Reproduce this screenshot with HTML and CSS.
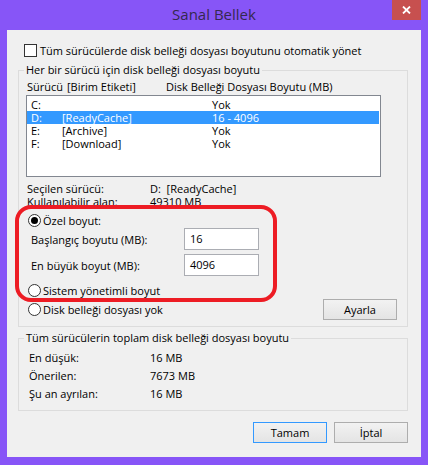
FILE: index.html
```html
<!DOCTYPE html>
<html lang="tr">
<head>
<meta charset="utf-8">
<title>Sanal Bellek</title>
<link rel="stylesheet" href="styles.css">
</head>
<body>
<div class="window">
  <div class="titlebar">
    <span class="title">Sanal Bellek</span>
    <div class="close">
      <svg width="9" height="8" viewBox="0 0 9 8"><path d="M1 0.5 L8 7.5 M8 0.5 L1 7.5" stroke="#fff" stroke-width="1.8" fill="none"/></svg>
    </div>
  </div>
  <div class="client">
    <div class="check-row"><span class="checkbox"></span>Tüm sürücülerde disk belleği dosyası boyutunu otomatik yönet</div>

    <div class="group group-drives">
      <span class="group-title">Her bir sürücü için disk belleği dosyası boyutu</span>
      <div class="list-head"><span>Sürücü</span><span>[Birim Etiketi]</span><span>Disk Belleği Dosyası Boyutu (MB)</span></div>
      <div class="listbox">
        <div class="row"><span>C:</span><span></span><span>Yok</span></div>
        <div class="row selected"><span>D:</span><span>[ReadyCache]</span><span>16 - 4096</span></div>
        <div class="row"><span>E:</span><span>[Archive]</span><span>Yok</span></div>
        <div class="row"><span>F:</span><span>[Download]</span><span>Yok</span></div>
      </div>
      <div class="info">
        <span>Seçilen sürücü:</span><span>D:&nbsp;&nbsp;[ReadyCache]</span>
        <span>Kullanılabilir alan:</span><span>49310 MB</span>
      </div>
      <div class="radio-row custom"><span class="radio checked"></span>Özel boyut:</div>
      <div class="field"><span>Başlangıç boyutu (MB):</span><span class="input">16</span></div>
      <div class="field"><span>En büyük boyut (MB):</span><span class="input">4096</span></div>
      <div class="radio-row system"><span class="radio"></span>Sistem yönetimli boyut</div>
      <div class="radio-row none"><span class="radio"></span>Disk belleği dosyası yok<span class="btn set">Ayarla</span></div>
    </div>

    <div class="group group-total">
      <span class="group-title">Tüm sürücülerin toplam disk belleği dosyası boyutu</span>
      <div class="totals">
        <span>En düşük:</span><span>16 MB</span>
        <span>Önerilen:</span><span>7673 MB</span>
        <span>Şu an ayrılan:</span><span>16 MB</span>
      </div>
    </div>

    <div class="actions">
      <span class="btn primary">Tamam</span>
      <span class="btn">İptal</span>
    </div>

    <div class="highlight"></div>
  </div>
</div>
</body>
</html>
```

FILE: styles.css
```css
* { box-sizing: border-box; }
html, body { margin: 0; padding: 0; }
body {
  width: 428px;
  height: 465px;
  overflow: hidden;
  background: #8755f7;
  font-family: "Open Sans", "Noto Sans", sans-serif;
  font-size: 11px;
  color: #000;
}
.window {
  width: 428px;
  height: 465px;
  background: #8755f7;
}
.titlebar {
  position: relative;
  height: 30px;
  display: flex;
  justify-content: center;
  align-items: center;
}
.title {
  font-size: 15px;
  color: #35284f;
  line-height: 20px;
  margin-top: -2px;
}
.close {
  position: absolute;
  top: 0;
  right: 7px;
  width: 29px;
  height: 20px;
  background: #c7504f;
  display: flex;
  align-items: center;
  justify-content: center;
}
.client {
  position: relative;
  margin: 0 7px;
  width: 414px;
  height: 427px;
  background: #f0f0f0;
  padding-top: 14px;
}
.check-row {
  display: flex;
  align-items: center;
  height: 13px;
  line-height: 13px;
  padding-left: 17px;
}
.checkbox {
  width: 13px;
  height: 13px;
  border: 1px solid #333;
  background: #fff;
  margin-right: 3px;
  flex: none;
}
.group {
  position: relative;
  margin-left: 11px;
  width: 390px;
  border: 1px solid #dcdcdc;
}
.group-title {
  position: absolute;
  top: -8px;
  left: 5px;
  padding: 0 2px;
  background: #f0f0f0;
  line-height: 14px;
  white-space: nowrap;
}
.group-drives { margin-top: 13px; }
.list-head {
  margin-top: 9px;
  height: 14px;
  line-height: 14px;
  padding-left: 8px;
  display: grid;
  grid-template-columns: 40px 99px auto;
  white-space: nowrap;
}
.listbox {
  margin: 1px 0 0 7px;
  width: 355px;
  height: 82px;
  border: 1px solid #828790;
  background: #fff;
  padding: 2px 1px 0 0;
}
.row {
  display: grid;
  grid-template-columns: 31px 150px auto;
  height: 13px;
  line-height: 13px;
  padding-left: 4px;
  white-space: nowrap;
}
.row.selected {
  background: #3399ff;
  color: #fff;
}
.info {
  margin-top: 5px;
  padding-left: 8px;
  display: grid;
  grid-template-columns: 123px auto;
  line-height: 13px;
}
.radio-row {
  display: flex;
  align-items: center;
  padding-left: 9px;
  white-space: nowrap;
}
.radio {
  width: 13px;
  height: 13px;
  border: 1px solid #333;
  border-radius: 50%;
  background: #fff;
  margin-right: 2px;
  flex: none;
  display: flex;
  align-items: center;
  justify-content: center;
}
.radio.checked::after {
  content: "";
  width: 7px;
  height: 7px;
  border-radius: 50%;
  background: #000;
}
.custom {
  margin-top: 6px;
  height: 13px;
  margin-bottom: 1px;
}
.field {
  display: grid;
  grid-template-columns: 153px 75px;
  align-items: center;
  height: 22px;
  padding-left: 12px;
}
.field + .field { margin-top: 4px; }
.input {
  height: 22px;
  line-height: 20px;
  border: 1px solid #abadb3;
  background: #fff;
  padding-left: 5px;
}
.system {
  margin-top: 7px;
  height: 14px;
}
.none {
  margin-top: 2px;
  height: 21px;
  margin-bottom: 6px;
}
.btn {
  display: flex;
  align-items: center;
  justify-content: center;
  width: 74px;
  height: 21px;
  border: 1px solid #adadad;
  background: linear-gradient(#f2f2f2, #e4e4e4);
}
.btn.set {
  margin-left: auto;
  margin-right: 10px;
}
.btn.primary { border-color: #3399ff; }
.group-total { margin-top: 11px; }
.totals {
  padding: 10px 0 7px 10px;
  display: grid;
  grid-template-columns: 121px auto;
  line-height: 18px;
}
.actions {
  margin-top: 11px;
  display: flex;
  justify-content: flex-end;
  gap: 7px;
  padding-right: 13px;
}
.highlight {
  position: absolute;
  left: 8px;
  top: 175px;
  width: 262px;
  height: 97px;
  border: 4px solid #ed1c24;
  border-radius: 16px;
  pointer-events: none;
}
```
